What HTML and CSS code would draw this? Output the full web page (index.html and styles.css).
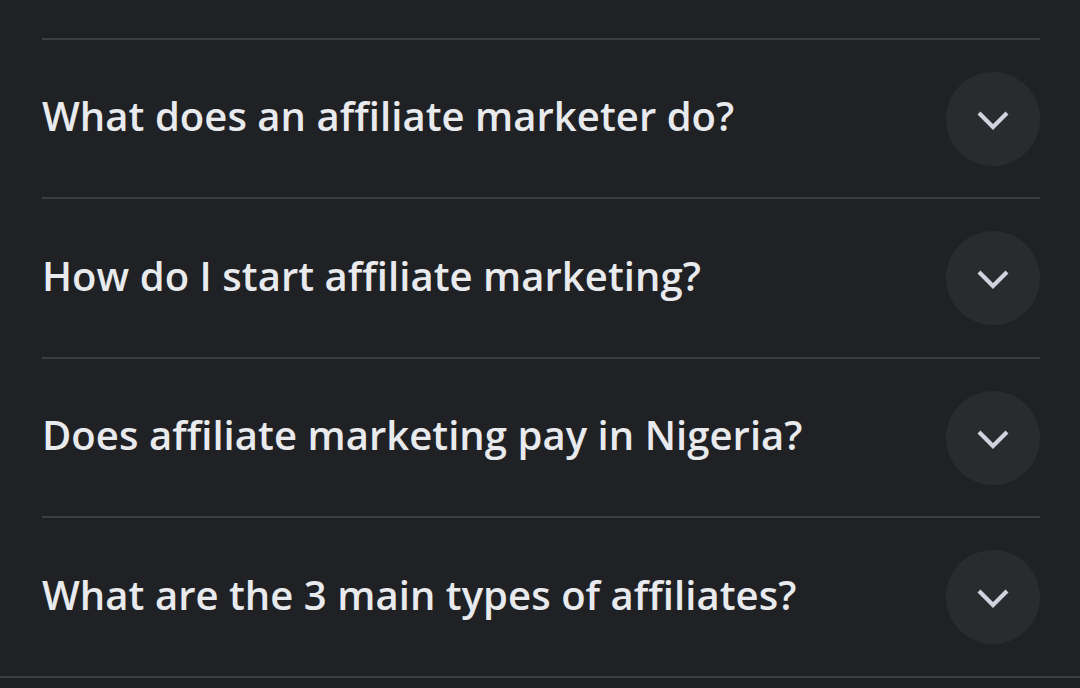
FILE: index.html
```html
<!DOCTYPE html>
<html lang="en">
<head>
<meta charset="utf-8">
<title>People also ask</title>
<link rel="stylesheet" href="styles.css">
</head>
<body>
<div class="faq">
  <div class="item">
    <span class="q">What does an affiliate marketer do?</span>
    <span class="btn"><svg viewBox="0 0 32 20" width="32" height="20"><path d="M2 3 L16 17 L30 3" fill="none" stroke="#d2d3de" stroke-width="4.2"/></svg></span>
  </div>
  <div class="item">
    <span class="q">How do I start affiliate marketing?</span>
    <span class="btn"><svg viewBox="0 0 32 20" width="32" height="20"><path d="M2 3 L16 17 L30 3" fill="none" stroke="#d2d3de" stroke-width="4.2"/></svg></span>
  </div>
  <div class="item">
    <span class="q">Does affiliate marketing pay in Nigeria?</span>
    <span class="btn"><svg viewBox="0 0 32 20" width="32" height="20"><path d="M2 3 L16 17 L30 3" fill="none" stroke="#d2d3de" stroke-width="4.2"/></svg></span>
  </div>
  <div class="item">
    <span class="q">What are the 3 main types of affiliates?</span>
    <span class="btn"><svg viewBox="0 0 32 20" width="32" height="20"><path d="M2 3 L16 17 L30 3" fill="none" stroke="#d2d3de" stroke-width="4.2"/></svg></span>
  </div>
</div>
<div class="end"></div>
</body>
</html>
```

FILE: styles.css
```css
html, body {
  margin: 0;
  padding: 0;
  background: #202124;
  height: 688px;
  overflow: hidden;
}
.faq {
  padding: 38px 40px 0 42px;
}
.item {
  display: flex;
  align-items: center;
  justify-content: space-between;
  border-top: 2px solid #3c3d41;
  height: 157px;
}
.item:nth-child(even) {
  height: 158px;
}
.q {
  font-family: "Open Sans", sans-serif;
  font-size: 40px;
  font-weight: 600;
  color: #e8eaed;
  letter-spacing: 0.05px;
  position: relative;
  top: -3px;
}
.btn {
  width: 94px;
  height: 94px;
  border-radius: 50%;
  background: #2a2b2e;
  display: flex;
  align-items: center;
  justify-content: center;
}
.btn svg {
  display: block;
  margin-top: 2px;
}
.end {
  border-top: 2px solid #3c3d41;
}
```
